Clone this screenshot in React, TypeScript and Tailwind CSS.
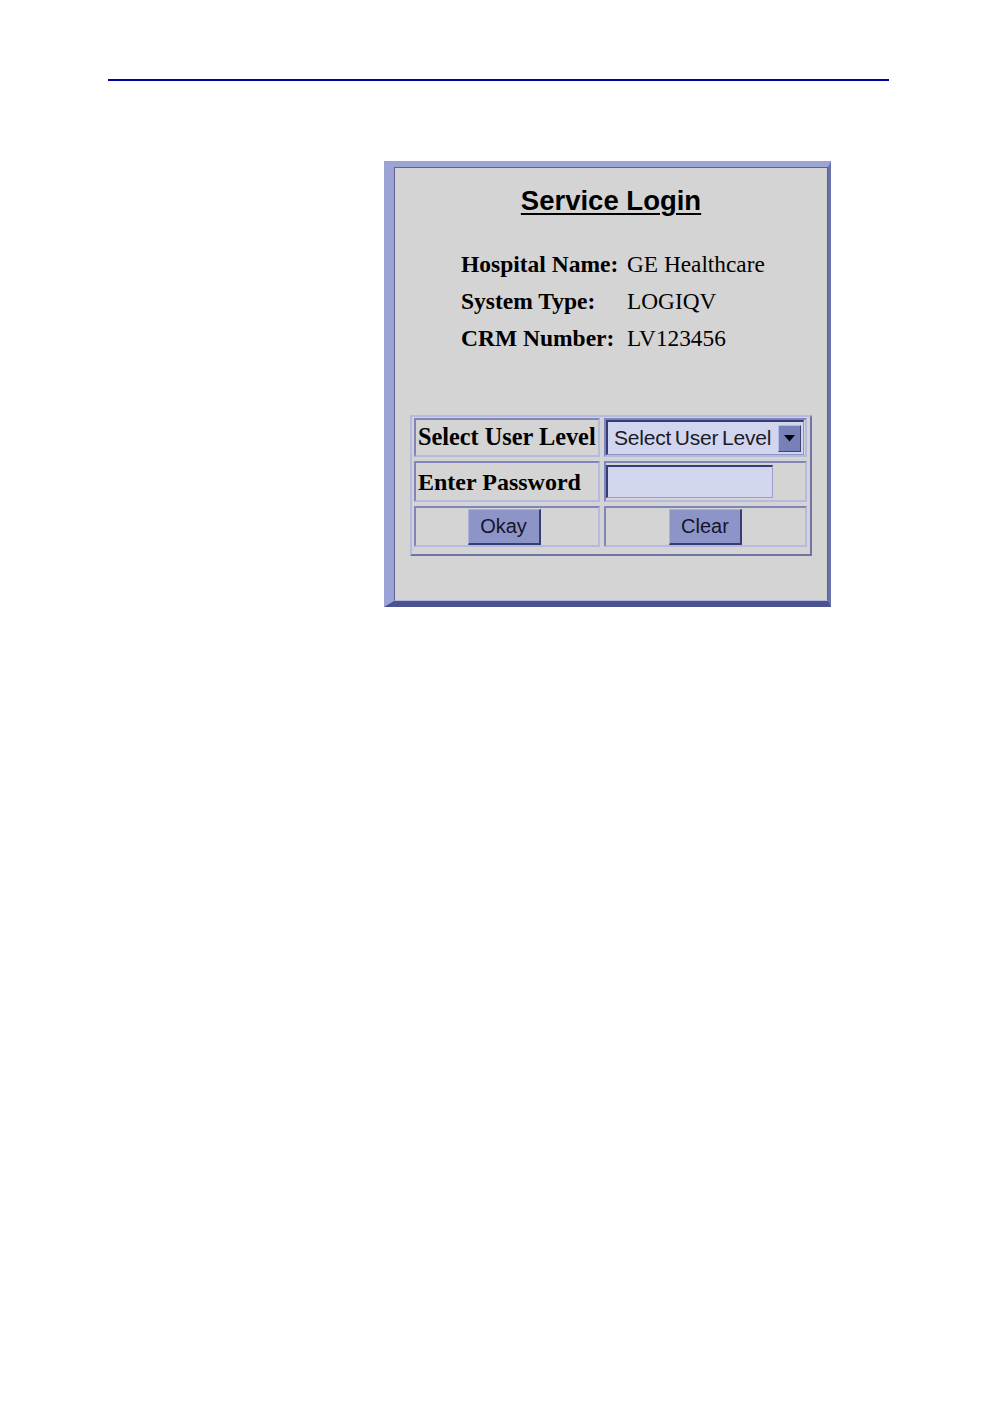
// Service Login panel, old-style intranet form
const serif = "font-['Liberation_Serif','Times_New_Roman',serif]"
const sans = "font-['Liberation_Sans',Arial,sans-serif]"

function InfoRow({ label, value }: { label: string; value: string }) {
  return (
    <div className="flex h-[37px] items-center">
      <div className={`${serif} w-[166px] text-[23.5px] font-bold text-black`}>{label}</div>
      <div className={`${serif} text-[23.3px] text-black`}>{value}</div>
    </div>
  )
}

function Cell({ children, className = '' }: { children?: React.ReactNode; className?: string }) {
  return (
    <div
      className={`flex items-center border-2 border-t-[#8087b8] border-l-[#8087b8] border-b-[#b6bade] border-r-[#b6bade] ${className}`}
    >
      {children}
    </div>
  )
}

function Button({ label }: { label: string }) {
  return (
    <button
      type="button"
      className={`${sans} flex h-[36px] w-[73px] items-center justify-center border-t border-l border-t-[#aab1dc] border-l-[#aab1dc] border-b-2 border-r-2 border-b-[#363c74] border-r-[#363c74] bg-[#8c94c8] text-[20px] text-[#15152a]`}
    >
      {label}
    </button>
  )
}

export default function App() {
  return (
    <div className="min-h-[1418px] w-[998px] bg-white pt-[79px]">
      <div className="mx-[108px] h-[2px] w-[781px] bg-[#0000a0]" />

      {/* framed panel */}
      <div className="ml-[384px] mt-[80px] w-[447px] border-t-[6px] border-l-[10px] border-r-[3px] border-b-[6px] border-t-[#9ba4d4] border-l-[#9ba4d4] border-r-[#6a72aa] border-b-[#4a5290]">
        <div className="h-[434px] border-t border-l border-r border-b border-t-[#5a6296] border-l-[#5a6296] border-r-[#5a6296] border-b-[#b0b6dc] bg-[#d4d4d4] pt-[17px]">
          <h1
            className={`${sans} text-center text-[27.5px] leading-[32px] font-bold text-black underline decoration-2 underline-offset-[3px]`}
          >
            Service Login
          </h1>

          <div className="ml-[66px] mt-[29px]">
            <InfoRow label="Hospital Name:" value="GE Healthcare" />
            <InfoRow label="System Type:" value="LOGIQV" />
            <InfoRow label="CRM Number:" value="LV123456" />
          </div>

          {/* login table */}
          <div className="mx-[15px] mt-[58px] border-2 border-t-[#b6bade] border-l-[#b6bade] border-b-[#6e74a8] border-r-[#6e74a8] px-[2px] pt-[1px] pb-[7px]">
            <div className="grid grid-cols-[186px_203px] grid-rows-[39px_41px_41px] gap-[4px]">
              <Cell className="pl-[2px]">
                <span className={`${serif} text-[24.3px] font-bold text-black whitespace-nowrap`}>Select User Level</span>
              </Cell>
              <Cell className="px-0">
                <div className="flex h-[35px] w-[198px] items-center border-t-2 border-l-2 border-r border-b border-t-[#363c78] border-l-[#363c78] border-r-[#8c94c4] border-b-[#8c94c4] bg-[#d2d5ee] pl-[6px] pr-[2px]">
                  <span className={`${sans} flex-1 text-[21px] tracking-[-0.2px] text-[#1a1a2a] [word-spacing:-2px] whitespace-nowrap`}>
                    Select User Level
                  </span>
                  <div className="flex h-[27px] w-[23px] items-center justify-center border-t border-l border-t-[#b4bae0] border-l-[#b4bae0] border-r border-b border-r-[#3c4278] border-b-[#3c4278] bg-[#7880b8]">
                    <svg width="11" height="7" viewBox="0 0 11 7">
                      <path d="M0 0 L11 0 L5.5 6.5 Z" fill="#000" />
                    </svg>
                  </div>
                </div>
              </Cell>
              <Cell className="pl-[2px]">
                <span className={`${serif} text-[24px] font-bold text-black whitespace-nowrap`}>Enter Password</span>
              </Cell>
              <Cell>
                <div className="h-[33px] w-[167px] border-t-2 border-l-2 border-r border-b border-t-[#363c78] border-l-[#363c78] border-r-[#9aa0cc] border-b-[#9aa0cc] bg-[#d2d5ee]" />
              </Cell>
              <Cell className="justify-center pr-[6px]">
                <Button label="Okay" />
              </Cell>
              <Cell className="justify-center">
                <Button label="Clear" />
              </Cell>
            </div>
          </div>
        </div>
      </div>
    </div>
  )
}
